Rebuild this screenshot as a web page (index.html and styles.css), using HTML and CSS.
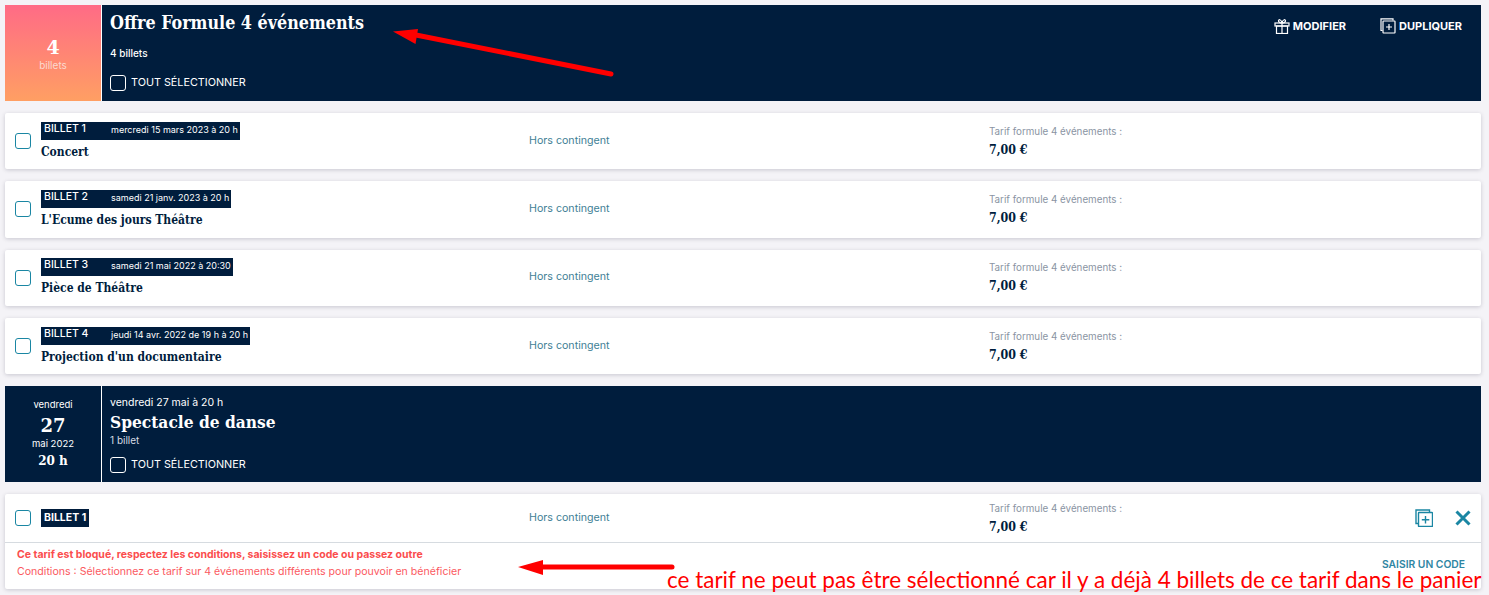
FILE: index.html
```html
<!DOCTYPE html>
<html>
<head>
    <meta charset="UTF-8">
    <title>Offre Formule 4 événements</title>
    <link rel="stylesheet" href="styles.css">
</head>
<body>

<div class="head">
    <div class="tile tile-offer">
        <div class="tile-num">4</div>
        <div class="tile-sub">billets</div>
    </div>
    <div class="head-body">
        <h1 class="head-title head-title-offer">Offre Formule 4 événements</h1>
        <div class="head-count head-count-offer">4 billets</div>
        <label class="select-all select-all-offer"><span class="box box-light"></span>TOUT SÉLECTIONNER</label>
    </div>
    <div class="head-actions">
        <a class="action" href="#">
            <svg width="16" height="16" viewBox="0 0 16 16" fill="none" stroke="#fff" stroke-width="1.2"><rect x="1" y="5" width="14" height="3"/><rect x="2.5" y="8" width="11" height="7.5"/><path d="M8 5v10.500M8 5C6 5 4.500 4.200 4.500 2.800 4.500 1.300 7 .8 8 5ZM8 5c2 0 3.500-.8 3.500-2.200C11.500 1.300 9 .8 8 5Z"/></svg>
            MODIFIER
        </a>
        <a class="action" href="#">
            <svg width="16" height="16" viewBox="0 0 16 16" fill="none" stroke="#fff" stroke-width="1.200"><path d="M13 2.500V.8H1v11.700h1.500"/><rect x="3" y="3" width="12" height="12" rx=".5"/><path d="M9 6v6M6 9h6"/></svg>
            DUPLIQUER
        </a>
    </div>
</div>

<div class="card">
    <div class="row">
        <span class="box"></span>
        <div class="row-main">
            <div class="tag"><span class="tag-name">BILLET 1</span><span class="tag-date">mercredi 15 mars 2023 à 20 h</span></div>
            <div class="row-title">Concert</div>
        </div>
        <div class="row-quota">Hors contingent</div>
        <div class="row-price">
            <div class="price-label">Tarif formule 4 événements :</div>
            <div class="price">7,00 €</div>
        </div>
    </div>
</div>

<div class="card">
    <div class="row">
        <span class="box"></span>
        <div class="row-main">
            <div class="tag"><span class="tag-name">BILLET 2</span><span class="tag-date">samedi 21 janv. 2023 à 20 h</span></div>
            <div class="row-title">L'Ecume des jours Théâtre</div>
        </div>
        <div class="row-quota">Hors contingent</div>
        <div class="row-price">
            <div class="price-label">Tarif formule 4 événements :</div>
            <div class="price">7,00 €</div>
        </div>
    </div>
</div>

<div class="card">
    <div class="row">
        <span class="box"></span>
        <div class="row-main">
            <div class="tag"><span class="tag-name">BILLET 3</span><span class="tag-date">samedi 21 mai 2022 à 20:30</span></div>
            <div class="row-title">Pièce de Théâtre</div>
        </div>
        <div class="row-quota">Hors contingent</div>
        <div class="row-price">
            <div class="price-label">Tarif formule 4 événements :</div>
            <div class="price">7,00 €</div>
        </div>
    </div>
</div>

<div class="card">
    <div class="row">
        <span class="box"></span>
        <div class="row-main">
            <div class="tag"><span class="tag-name">BILLET 4</span><span class="tag-date">jeudi 14 avr. 2022 de 19 h à 20 h</span></div>
            <div class="row-title">Projection d'un documentaire</div>
        </div>
        <div class="row-quota">Hors contingent</div>
        <div class="row-price">
            <div class="price-label">Tarif formule 4 événements :</div>
            <div class="price">7,00 €</div>
        </div>
    </div>
</div>

<div class="head">
    <div class="tile">
        <div class="tile-day">vendredi</div>
        <div class="tile-date">27</div>
        <div class="tile-day">mai 2022</div>
        <div class="tile-hour">20 h</div>
    </div>
    <div class="head-body">
        <div class="head-when">vendredi 27 mai à 20 h</div>
        <div class="head-title head-title-event">Spectacle de danse</div>
        <div class="head-count">1 billet</div>
        <label class="select-all"><span class="box box-light"></span>TOUT SÉLECTIONNER</label>
    </div>
</div>

<div class="card">
    <div class="row row-short">
        <span class="box"></span>
        <div class="row-main">
            <div class="tag"><span class="tag-name">BILLET 1</span></div>
        </div>
        <div class="row-quota">Hors contingent</div>
        <div class="row-price">
            <div class="price-label">Tarif formule 4 événements :</div>
            <div class="price">7,00 €</div>
        </div>
        <div class="row-tools">
            <svg width="18" height="18" viewBox="0 0 18 18" fill="none" stroke="#1a86a3" stroke-width="1.400"><path d="M14.500 3V1H1v13.500h2"/><rect x="3.500" y="3.500" width="14" height="14" rx=".5"/><path d="M10.500 7v7.500M6.800 10.700h7.500"/></svg>
            <svg width="16" height="16" viewBox="0 0 16 16" fill="none" stroke="#1a86a3" stroke-width="3"><path d="M1.500 1.500l13 13M14.500 1.500l-13 13"/></svg>
        </div>
    </div>
    <div class="blocked">
        <div class="blocked-text">
            <div class="blocked-title">Ce tarif est bloqué, respectez les conditions, saisissez un code ou passez outre</div>
            <div class="blocked-cond">Conditions : Sélectionnez ce tarif sur 4 événements différents pour pouvoir en bénéficier</div>
        </div>
        <a class="code-link" href="#">SAISIR UN CODE</a>
    </div>
</div>

<!-- annotations posees par dessus la capture -->
<svg class="marks" width="1489" height="595" viewBox="0 0 1489 595">
    <path d="M611 74L416 35" stroke="#f00" stroke-width="5" stroke-linecap="round"/>
    <path d="M393 31.500L418 29L415.500 44Z" fill="#f00"/>
    <path d="M672 567H540" stroke="#f00" stroke-width="5" stroke-linecap="round"/>
    <path d="M518 567L543 560V575Z" fill="#f00"/>
</svg>
<div class="note">ce tarif ne peut pas être sélectionné car il y a déjà 4 billets de ce tarif dans le panier</div>

</body>
</html>
```

FILE: styles.css
```css
* { margin: 0; padding: 0; box-sizing: border-box; text-decoration: none; }
html, body { height: 595px; overflow: hidden; }
body { background: #f4f3f7; padding: 5px 8px 0 5px; font-family: "Inter", "Liberation Sans", sans-serif; color: #001d3d; position: relative; }

.head { display: flex; height: 96px; background: #001d3d; color: #fff; margin-bottom: 12px; }
.tile { width: 97px; flex: none; border-right: 1px solid #fff; display: flex; flex-direction: column; align-items: center; justify-content: center; }
.tile-offer { background: linear-gradient(#ff6b86, #ff9f63); }
.tile-num { font-family: "DejaVu Serif", serif; font-weight: bold; font-size: 19px; line-height: 24px; }
.tile-sub { font-size: 10px; line-height: 12px; color: #fbd9cf; margin-bottom: 1px; }
.tile-day { font-size: 9.500px; line-height: 14px; }
.tile-date { font-family: "DejaVu Serif", serif; font-weight: bold; font-size: 18px; line-height: 22px; margin-top: 3px; }
.tile-hour { font-family: "DejaVu Serif", serif; font-weight: bold; font-size: 12px; line-height: 20px; }

.head-body { flex: 1; padding-left: 8px; display: flex; flex-direction: column; }
.head-title { font-family: "DejaVu Serif Condensed", "DejaVu Serif", serif; font-weight: bold; font-size: 17.200px; line-height: 24px; }
.head-title-offer { font-size: 17.750px; margin-top: 6px; }
.head-when { font-size: 10.500px; line-height: 14px; margin-top: 10px; }
.head-count { font-size: 10px; line-height: 12px; color: #d5dae2; }
.head-count-offer { color: #fff; font-weight: 500; margin-top: 12px; }
.select-all { display: flex; align-items: center; gap: 5px; font-size: 10.800px; line-height: 16px; margin-top: 11px; }
.select-all-offer { margin-top: 16px; }

.head-actions { display: flex; gap: 34px; padding: 13px 19px 0 0; }
.action { display: flex; align-items: flex-start; gap: 3px; color: #fff; font-size: 11px; font-weight: 700; line-height: 16px; }

.box { width: 16px; height: 16px; flex: none; border: 1px solid #1a86a3; border-radius: 3px; background: #fff; }
.box-light { background: none; border-color: #fff; }

.card { background: #fff; border-radius: 2px; box-shadow: 0 1px 4px rgba(0, 0, 40, .18); margin-bottom: 12px; }
.row { display: flex; align-items: center; height: 56.330px; padding-left: 10px; position: relative; }
.row-short { height: 48px; }
.row-main { width: 488px; flex: none; margin-left: 10px; }
.tag { display: flex; width: fit-content; background: #001d3d; color: #fff; height: 18px; padding: 0 2px 0 3px; line-height: 13px; margin-bottom: 3px; }
.row-short .tag { margin-bottom: 0; padding-right: 3px; }
.tag-name { font-size: 10.500px; font-weight: 500; width: 67px; white-space: nowrap; }
.tag-name:last-child { width: auto; font-weight: 700; line-height: 17px; }
.tag-date { font-size: 9px; line-height: 16px; white-space: nowrap; }
.row-title { font-family: "DejaVu Serif Condensed", "DejaVu Serif", serif; font-weight: bold; font-size: 12px; line-height: 18px; }
.row-quota { width: 460px; flex: none; font-size: 10.650px; line-height: 13px; color: #3f7f96; margin-top: -2px; }
.price-label { font-size: 9.800px; line-height: 13px; color: #8a94a3; margin: 1px 0 3px; }
.price { font-family: "DejaVu Serif Condensed", "DejaVu Serif", serif; font-weight: bold; font-size: 12.300px; line-height: 18px; }
.row-tools { margin-left: auto; display: flex; align-items: center; gap: 22px; padding-right: 10px; }

.blocked { display: flex; justify-content: space-between; border-top: 1px solid #d6dbe0; height: 47px; padding: 4px 16px 0 12px; }
.blocked-title { font-size: 10.500px; font-weight: 700; line-height: 15px; color: #fb4d4d; }
.blocked-cond { font-size: 10.600px; line-height: 20px; color: #fb5a5f; }
.code-link { font-size: 10.300px; font-weight: 600; line-height: 12px; color: #2f86a3; margin-top: 11px; }

.marks { position: absolute; left: 0; top: 0; pointer-events: none; }
.note { position: absolute; left: 667px; top: 571px; font-family: "Lato", "Open Sans", sans-serif; font-size: 22.500px; line-height: 18px; color: #f00; white-space: nowrap; }
```
